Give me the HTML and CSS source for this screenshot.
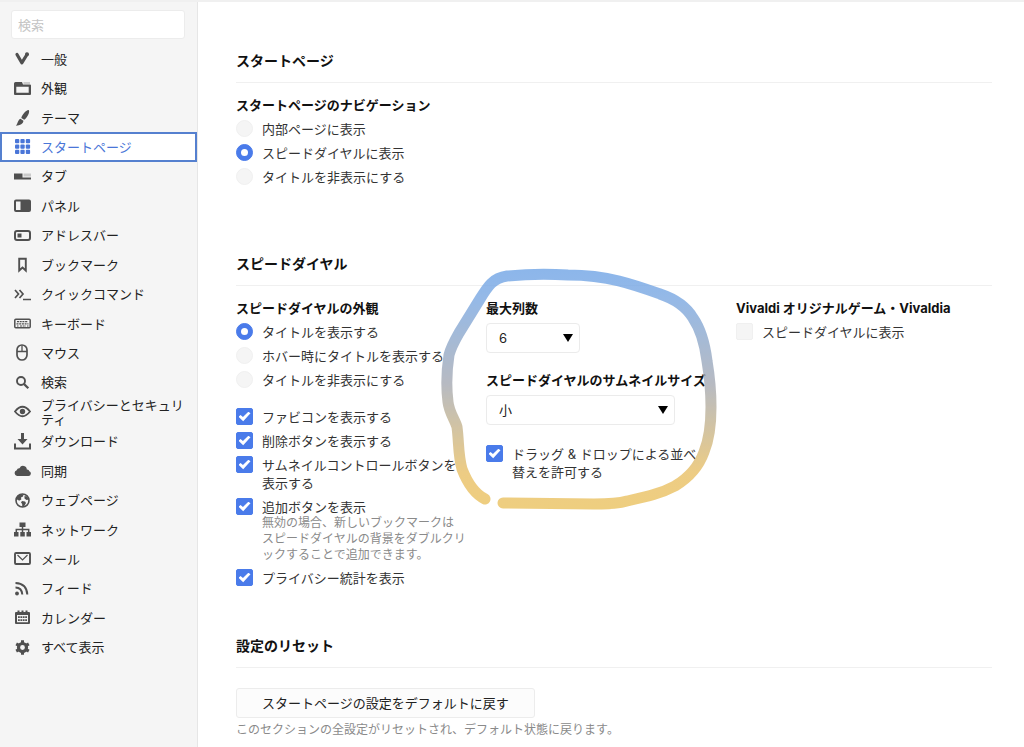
FILE: index.html
```html
<!DOCTYPE html>
<html lang="ja">
<head>
<meta charset="utf-8">
<meta name="viewport" content="width=device-width, initial-scale=1">
<title>スタートページ</title>
<link rel="stylesheet" href="styles.css">
</head>
<body>
<div class="app">
  <aside class="sidebar">
    <input class="search" type="search" placeholder="検索" aria-label="検索">
    <nav class="nav">
      <a class="nav-item" href="#"><svg class="icon" viewBox="0 0 17 17"><path d="M3 4.500 7.800 12.800 13 4.500" fill="none" stroke="currentColor" stroke-width="3.200" stroke-linecap="round" stroke-linejoin="round"/><circle cx="13" cy="4.300" r="2" fill="currentColor"/></svg><span>一般</span></a>
      <a class="nav-item" href="#"><svg class="icon" viewBox="0 0 17 17"><path d="M9.500 2H16v2H9.500z" fill="currentColor" opacity=".25"/><path fill-rule="evenodd" fill="currentColor" d="M1.500 2H8l1 2.500h7q1 0 1 1V14q0 1-1 1H1q-1 0-1-1V3.500Q0 2 1.500 2zM2.300 6.800v6h12.400v-6z"/></svg><span>外観</span></a>
      <a class="nav-item" href="#"><svg class="icon" viewBox="0 0 17 17"><path fill="currentColor" d="M14.500 1c1 .4.8 2.500-.3 4.800-1 2.200-2.600 4.200-4 5L7.300 8.900C8 6.200 11.700 1.200 14.500 1zM6.500 9.700l2.900 2c0 2.800-3.200 4.800-7.500 5 1.800-1.400 1.600-5.700 4.600-7z"/></svg><span>テーマ</span></a>
      <a class="nav-item nav-item-active" href="#" aria-current="page"><svg class="icon" viewBox="0 0 17 17"><g fill="currentColor"><rect x="1" y="1" width="4.300" height="4.300" rx="1"/><rect x="6.400" y="1" width="4.300" height="4.300" rx="1"/><rect x="11.800" y="1" width="4.300" height="4.300" rx="1"/><rect x="1" y="6.400" width="4.300" height="4.300" rx="1"/><rect x="6.400" y="6.400" width="4.300" height="4.300" rx="1"/><rect x="11.800" y="6.400" width="4.300" height="4.300" rx="1"/><rect x="1" y="11.800" width="4.300" height="4.300" rx="1"/><rect x="6.400" y="11.800" width="4.300" height="4.300" rx="1"/><rect x="11.800" y="11.800" width="4.300" height="4.300" rx="1"/></g></svg><span>スタートページ</span></a>
      <a class="nav-item" href="#"><svg class="icon" viewBox="0 0 17 17"><path fill="currentColor" d="M0 5.500h8.500v4H17v2H0z"/><path fill="currentColor" opacity=".25" d="M9.500 5.500H17v3H9.500z"/></svg><span>タブ</span></a>
      <a class="nav-item" href="#"><svg class="icon" viewBox="0 0 17 17"><path fill="currentColor" fill-rule="evenodd" d="M2 2.500h13q2 0 2 2v8.500q0 2-2 2H2q-2 0-2-2V4.500q0-2 2-2zM2 4.500V13h4.500V4.500z"/></svg><span>パネル</span></a>
      <a class="nav-item" href="#"><svg class="icon" viewBox="0 0 17 17"><rect x="1" y="4" width="15" height="9" rx="2" fill="none" stroke="currentColor" stroke-width="2"/><path d="M3.500 6.500h4v4h-4z" fill="currentColor"/></svg><span>アドレスバー</span></a>
      <a class="nav-item" href="#"><svg class="icon" viewBox="0 0 17 17"><path d="M5.200 2.800h6.600v11.700L8.500 11.500l-3.300 3z" fill="none" stroke="currentColor" stroke-width="1.900"/></svg><span>ブックマーク</span></a>
      <a class="nav-item" href="#"><svg class="icon" viewBox="0 0 17 17"><path d="m1 4 3.500 4L1 12M5.500 4 9 8l-3.500 4M9 13.500h8" fill="none" stroke="currentColor" stroke-width="1.700"/></svg><span>クイックコマンド</span></a>
      <a class="nav-item" href="#"><svg class="icon" viewBox="0 0 17 17"><rect x=".8" y="4.300" width="15.400" height="8.400" rx="1" fill="none" stroke="currentColor" stroke-width="1.500"/><path d="M3 6.600h11M2.500 8.800h12M3 11h1.500M6 11h6M13 11h1.500" fill="none" stroke="currentColor" stroke-width="1.200" stroke-dasharray="2 .7"/></svg><span>キーボード</span></a>
      <a class="nav-item" href="#"><svg class="icon" viewBox="0 0 17 17"><rect x="3" y="1" width="10" height="15" rx="5" fill="none" stroke="currentColor" stroke-width="1.700"/><path d="M3 7.500h10M8 1.500v6" stroke="currentColor" stroke-width="1.300"/></svg><span>マウス</span></a>
      <a class="nav-item" href="#"><svg class="icon" viewBox="0 0 17 17"><circle cx="7" cy="7" r="4" fill="none" stroke="currentColor" stroke-width="1.900"/><path d="m10 10 4.300 4.300" stroke="currentColor" stroke-width="2.300"/></svg><span>検索</span></a>
      <a class="nav-item" href="#"><svg class="icon" viewBox="0 0 17 17"><path d="M1 8.500q7.500-9.500 15 0-7.500 9.500-15 0z" fill="none" stroke="currentColor" stroke-width="1.800"/><circle cx="8.500" cy="8.500" r="2.700" fill="currentColor"/></svg><span>プライバシーとセキュリティ</span></a>
      <a class="nav-item" href="#"><svg class="icon" viewBox="0 0 17 17"><path fill="currentColor" d="M7 0h3v6h3.500l-5 5.500L3.500 6H7z"/><path d="M1 10.500v5h15v-5" fill="none" stroke="currentColor" stroke-width="2"/></svg><span>ダウンロード</span></a>
      <a class="nav-item" href="#"><svg class="icon" viewBox="0 0 17 17"><path fill="currentColor" d="M3 14a3 3 0 0 1-.3-5.800Q3.300 6 5.500 6.200 7 3.200 10 4q2.800.8 2.800 3.500 2.200-.2 2.500 1.700a2.500 2.500 0 0 1-.8 4.800z"/></svg><span>同期</span></a>
      <a class="nav-item" href="#"><svg class="icon" viewBox="0 0 17 17"><circle cx="8.500" cy="8.500" r="6.500" fill="none" stroke="currentColor" stroke-width="1.600"/><path fill="currentColor" d="M3 4.500 6.500 2l3 .5-.5 2-2 1 .3 2-2.300 1.300-1.300-1.300L2 9zM8 9l3 .5 1 1.500-2 3.500-1.800.5v-3L7 10.500zM10.500 4l2.500.5 2 3-2.500.5-2-1.500z"/></svg><span>ウェブページ</span></a>
      <a class="nav-item" href="#"><svg class="icon" viewBox="0 0 17 17"><path fill="currentColor" d="M5.500 1.500h6v4.500h-6zM0 11h4.500v4.500H0zM6.300 11h4.500v4.500H6.300zM12.500 11H17v4.500h-4.500z"/><path d="M8.500 6v5M2.300 11.500v-3h12.400v3" fill="none" stroke="currentColor" stroke-width="1.500"/></svg><span>ネットワーク</span></a>
      <a class="nav-item" href="#"><svg class="icon" viewBox="0 0 17 17"><rect x="1" y="3" width="15" height="11" rx="1" fill="none" stroke="currentColor" stroke-width="1.900"/><path d="m3.500 5 5 5 5-5" fill="none" stroke="currentColor" stroke-width="1.200"/></svg><span>メール</span></a>
      <a class="nav-item" href="#"><svg class="icon" viewBox="0 0 17 17"><circle cx="3" cy="13.500" r="1.900" fill="currentColor"/><path d="M1.500 7.500q6.300 0 6.800 7M1.500 3q11 .3 11.800 11.500" fill="none" stroke="currentColor" stroke-width="2"/></svg><span>フィード</span></a>
      <a class="nav-item" href="#"><svg class="icon" viewBox="0 0 17 17"><path fill="currentColor" fill-rule="evenodd" d="M2 3h1.500V1.500h2V3h2V1.500h2V3h2V1.500h2V3H15q1 0 1 1v10q0 1-1 1H2q-1 0-1-1V4q0-1 1-1zM3 6v7.200h11V6z"/><path d="M4 8.200h9M4 11.200h9" stroke="currentColor" stroke-width="1.800" stroke-dasharray="1.800 .6"/></svg><span>カレンダー</span></a>
      <a class="nav-item" href="#"><svg class="icon" viewBox="0 0 17 17"><circle cx="8.500" cy="8.500" r="4" fill="none" stroke="currentColor" stroke-width="3.200"/><path d="M8.500 1.200v3M8.500 12.800v3M2.200 4.900l2.600 1.500M12.200 10.600l2.600 1.500M2.200 12.100l2.600-1.500M12.200 6.400l2.600-1.500" stroke="currentColor" stroke-width="3"/></svg><span>すべて表示</span></a>
    </nav>
  </aside>

  <main class="content">
    <section class="section section-nav">
      <h2 class="section-title">スタートページ</h2>
      <div class="columns">
        <div class="column" role="radiogroup" aria-labelledby="nav-title">
          <h3 class="group-title" id="nav-title">スタートページのナビゲーション</h3>
          <label class="option"><input class="radio" type="radio" name="nav"><span>内部ページに表示</span></label>
          <label class="option"><input class="radio" type="radio" name="nav" checked><span>スピードダイヤルに表示</span></label>
          <label class="option"><input class="radio" type="radio" name="nav"><span>タイトルを非表示にする</span></label>
        </div>
      </div>
    </section>

    <section class="section section-dial">
      <h2 class="section-title">スピードダイヤル</h2>
      <div class="columns">
        <div class="column">
          <h3 class="group-title">スピードダイヤルの外観</h3>
          <label class="option"><input class="radio" type="radio" name="titles" checked><span>タイトルを表示する</span></label>
          <label class="option"><input class="radio" type="radio" name="titles"><span>ホバー時にタイトルを表示する</span></label>
          <label class="option"><input class="radio" type="radio" name="titles"><span>タイトルを非表示にする</span></label>
          <div class="checks">
            <label class="option"><input class="checkbox" type="checkbox" checked><span>ファビコンを表示する</span></label>
            <label class="option"><input class="checkbox" type="checkbox" checked><span>削除ボタンを表示する</span></label>
            <label class="option"><input class="checkbox" type="checkbox" checked><span>サムネイルコントロールボタンを表示する</span></label>
            <label class="option"><input class="checkbox" type="checkbox" checked><span>追加ボタンを表示<small class="hint">無効の場合、新しいブックマークは<br>スピードダイヤルの背景をダブルクリックすることで追加できます。</small></span></label>
            <label class="option"><input class="checkbox" type="checkbox" checked><span>プライバシー統計を表示</span></label>
          </div>
        </div>
        <div class="column column-inset">
          <label class="group-title" for="cols">最大列数</label>
          <div class="select-box select-small"><select class="select" id="cols"><option>6</option></select></div>
          <label class="group-title" for="size">スピードダイヤルのサムネイルサイズ</label>
          <div class="select-box select-wide"><select class="select" id="size"><option>小</option></select></div>
          <label class="option"><input class="checkbox" type="checkbox" checked><span>ドラッグ &amp; ドロップによる並べ替えを許可する</span></label>
        </div>
        <div class="column">
          <h3 class="group-title">Vivaldi オリジナルゲーム・Vivaldia</h3>
          <label class="option"><input class="checkbox" type="checkbox"><span>スピードダイヤルに表示</span></label>
        </div>
        <svg class="marker" viewBox="436 260 290 260" aria-hidden="true">
          <defs><linearGradient id="ink" gradientUnits="userSpaceOnUse" x1="0" y1="270" x2="0" y2="508"><stop offset="0" stop-color="#70a5e6"/><stop offset=".12" stop-color="#7ba8e2"/><stop offset=".48" stop-color="#a6aab3"/><stop offset=".85" stop-color="#e9c066"/><stop offset="1" stop-color="#ebc260"/></linearGradient></defs>
          <path fill="none" stroke="url(#ink)" stroke-width="11" stroke-linecap="round" stroke-linejoin="round" d="M485 499C475 494 467 482 462 469C458 455 459 442 457 427C455 420 449 412 448 402C446 386 447 368 449 355C451 347 455 340 459 333L480 299C488 286 493 278 507 276C528 274 550 274 568 275C590 275 603 277 619 281C635 285 646 289 660 294C678 300 687 308 693 318C702 331 705 345 707 361C710 379 711 389 711 407C711 424 709 440 704 452C699 466 690 477 675 486C660 494 645 497 627 501C617 504 607 504 594 504L503 503"/>
        </svg>
      </div>
    </section>

    <section class="section">
      <h2 class="section-title">設定のリセット</h2>
      <div class="reset">
        <button class="button" type="button">スタートページの設定をデフォルトに戻す</button>
        <p class="hint">このセクションの全設定がリセットされ、デフォルト状態に戻ります。</p>
      </div>
    </section>
  </main>
</div>
</body>
</html>
```
FILE: styles.css
```css
* { box-sizing: border-box; }

body {
  margin: 0;
  background: #fff;
  color: #333;
  font: 13px/18px Inter, "Noto Sans CJK JP", sans-serif;
}

.app {
  display: flex;
  min-height: 100vh;
  border-top: 2px solid #f0f0f0;
}

/* Sidebar */
.sidebar {
  display: flex;
  flex: none;
  flex-direction: column;
  width: 198px;
  padding: 8px 0 85px;
  background: #f5f5f5;
  border-right: 1px solid #e6e6e6;
}

.search {
  min-width: 0;
  height: 29px;
  margin: 0 12px 5px 11px;
  padding: 0 6px;
  border: 1px solid #ececec;
  border-radius: 3px;
  background: #fff;
  color: #333;
  font: inherit;
}
.search::placeholder { color: #c4c4c4; }

.nav {
  display: grid;
  flex: 1;
  grid-auto-rows: minmax(28px, 1fr);
}

.nav-item {
  display: flex;
  align-items: center;
  gap: 10px;
  min-height: 0;
  padding: 0 6px 0 14px;
  color: #222;
  line-height: 14px;
  text-decoration: none;
}
.nav-item-active {
  padding: 0 4px 0 12px;
  border: 2px solid #5580cf;
  background: #fff;
  color: #4a76d8;
}

.icon {
  flex: none;
  width: 17px;
  height: 17px;
  color: #505050;
}
.nav-item-active .icon { color: #4a76d8; }

/* Settings */
.content {
  flex: 1;
  min-width: 0;
  padding: 49px 32px 0 38px;
}

.section-nav { margin-bottom: 65px; }
.section-dial { margin-bottom: 46px; }

.section-title {
  margin: 0;
  padding-bottom: 11px;
  border-bottom: 1px solid #f0f0f0;
  color: #111;
  font-size: 14px;
  line-height: 20px;
}

.columns {
  position: relative;
  display: grid;
  grid-template-columns: repeat(auto-fill, 250px);
  padding-top: 12px;
}

.column { padding-right: 20px; }
.column-inset { padding-right: 28px; }

.group-title {
  display: block;
  margin: 0 0 2px;
  color: #111;
  font-size: 13px;
  font-weight: 700;
  line-height: 20px;
  white-space: nowrap;
}

.option {
  display: flex;
  align-items: flex-start;
  gap: 9px;
  padding: 3px 0;
}

.checks { margin-top: 13px; }

.radio,
.checkbox {
  display: grid;
  flex: none;
  place-items: center;
  width: 17px;
  height: 17px;
  margin: 0;
  border: 1px solid #f0f0f0;
  background: #f5f5f5;
  appearance: none;
}
.radio { border-radius: 50%; }
.checkbox { border-radius: 2px; }

.radio:checked,
.checkbox:checked {
  border-color: #4a7bea;
  background: #4a7bea;
}
.radio:checked::before {
  width: 7px;
  height: 7px;
  border-radius: 50%;
  background: #fff;
  content: "";
}
.checkbox:checked::before {
  width: 12px;
  height: 10px;
  background: #fff;
  clip-path: polygon(0 52%, 17% 34%, 37% 56%, 82% 2%, 100% 18%, 39% 97%);
  content: "";
}

.hint {
  display: block;
  margin: -1px 0 0;
  color: #8a8a8a;
  font-size: 12px;
  line-height: 16px;
}

.select-box {
  position: relative;
  margin: 5px 0 17px;
}
.select-small { width: 94px; }
.select-wide { width: 189px; }
.select-box::after {
  position: absolute;
  top: 11px;
  right: 7px;
  width: 10px;
  height: 8px;
  background: #000;
  clip-path: polygon(0 0, 100% 0, 50% 100%);
  content: "";
  pointer-events: none;
}

.select {
  display: block;
  width: 100%;
  height: 30px;
  padding: 0 24px 0 12px;
  border: 1px solid #ebebeb;
  border-radius: 4px;
  background: #fff;
  color: #222;
  font: inherit;
  appearance: none;
}

/* Hand-drawn highlight over the thumbnail settings */
.marker {
  position: absolute;
  top: -26px;
  left: 200px;
  width: 290px;
  height: 260px;
  opacity: .8;
  pointer-events: none;
}

.reset { padding-top: 20px; }

.button {
  height: 30px;
  padding: 0 25px;
  border: 1px solid #ececec;
  border-radius: 3px;
  background: #fcfcfc;
  color: #222;
  font: inherit;
}

.reset .hint { margin-top: 4px; }
```
